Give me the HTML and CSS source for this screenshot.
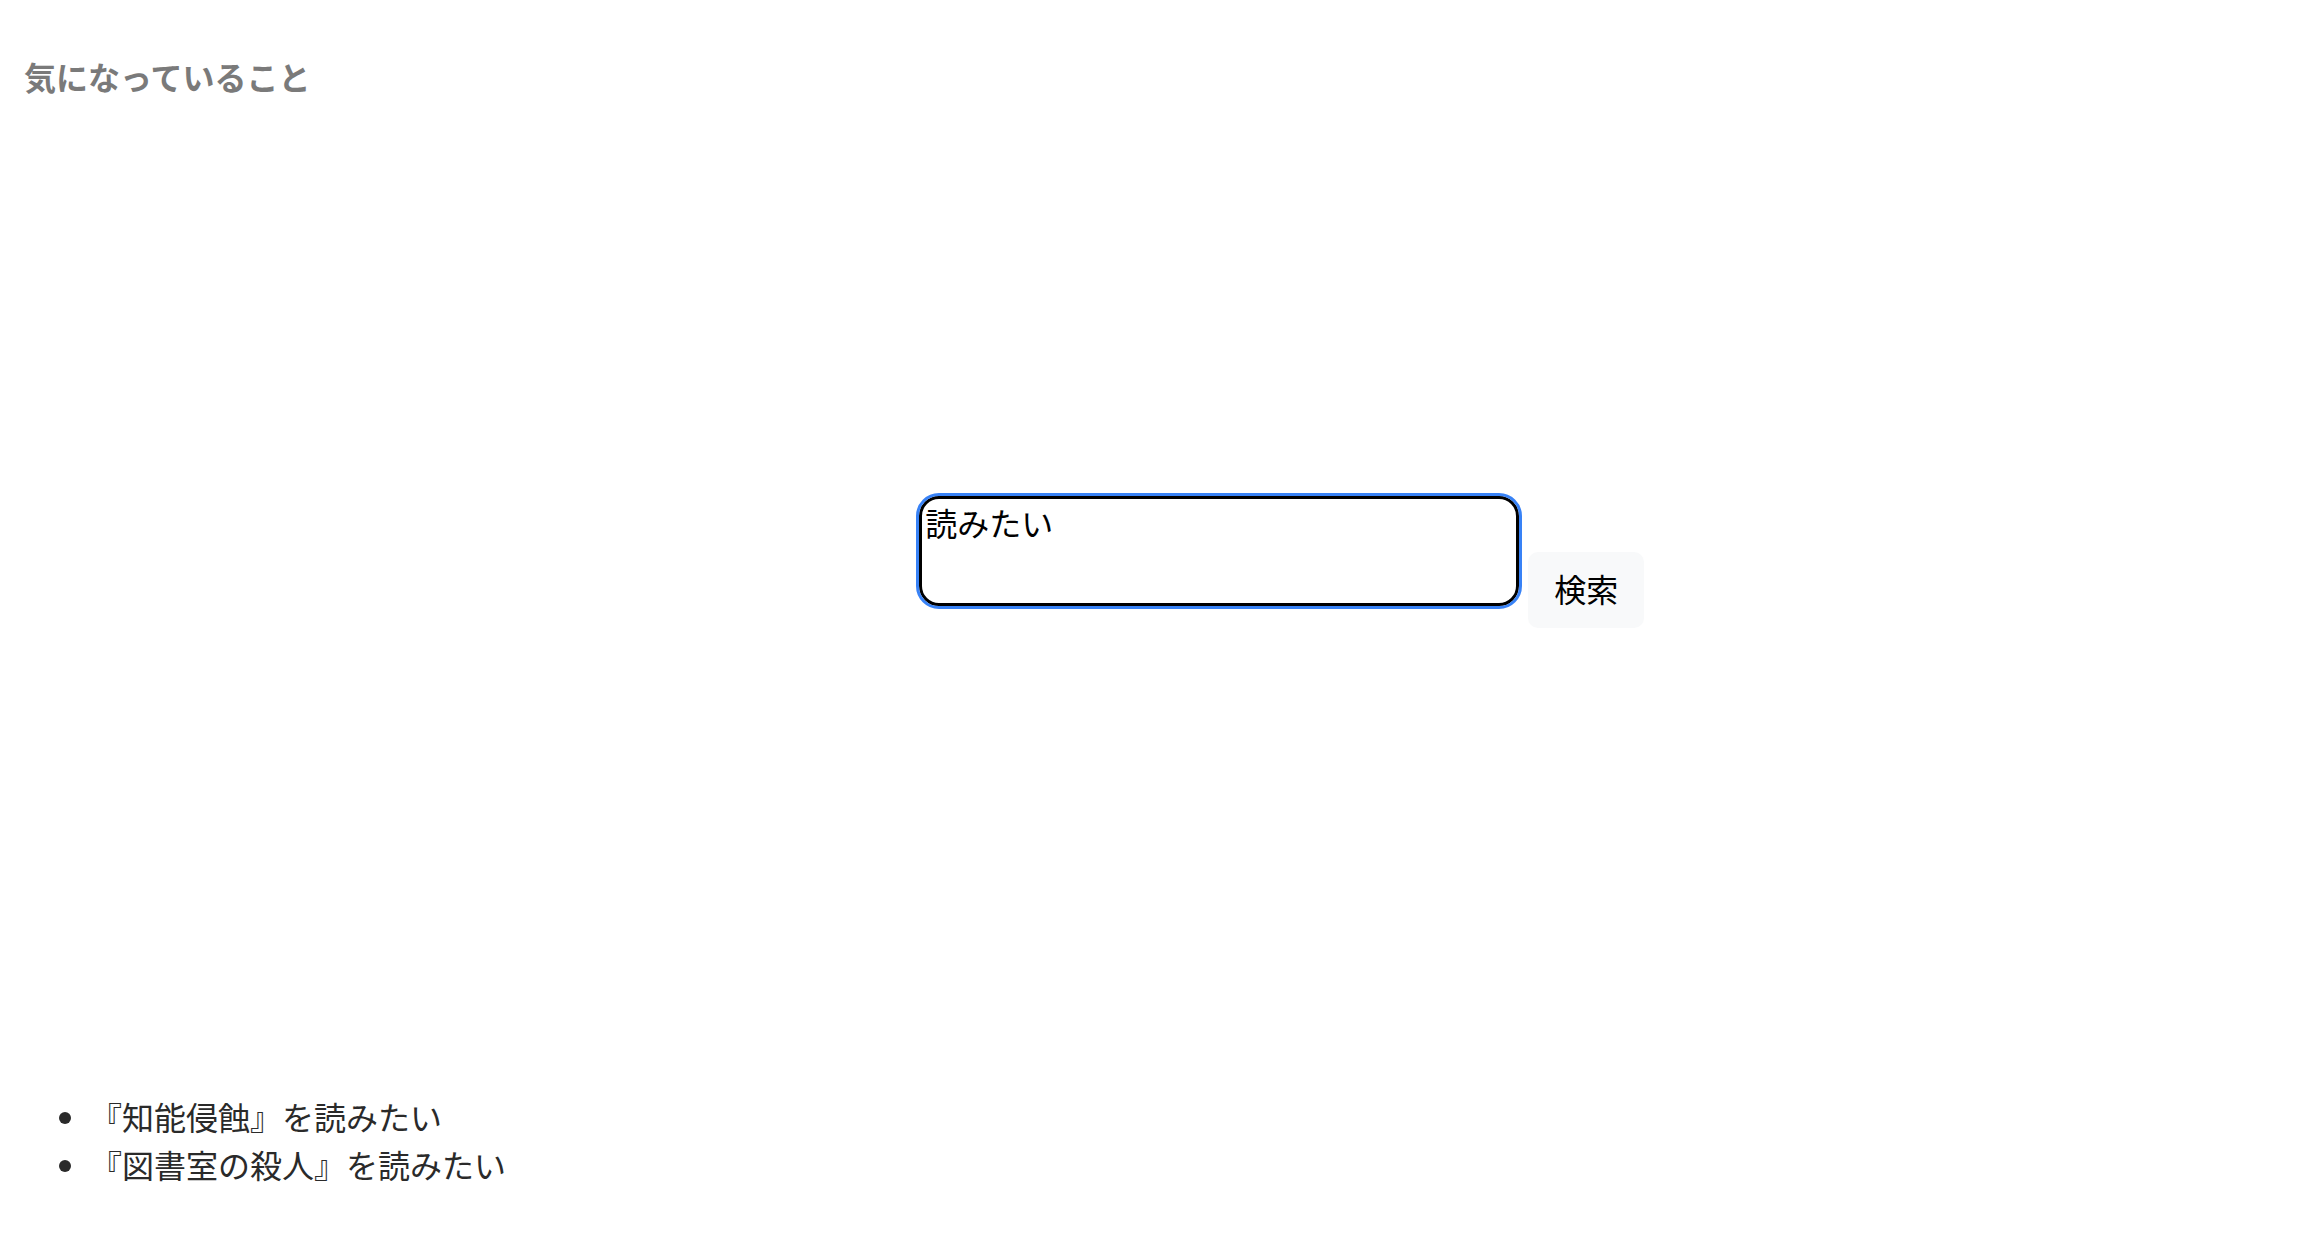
FILE: index.html
```html
<!DOCTYPE html>
<html lang="ja">
<head>
    <meta charset="UTF-8">
    <meta name="viewport" content="width=device-width, initial-scale=1.0">
    <title>気になっていること</title>
    <link rel="stylesheet" href="styles.css">
</head>
<body>
    <header class="header">
        <h1 class="title">気になっていること</h1>
    </header>

    <form class="search" onsubmit="return false">
        <textarea class="search-input" id="searchInput">読みたい</textarea>
        <button class="search-btn" type="submit">検索</button>
    </form>

    <ul class="todo-list">
        <li>『知能侵蝕』を読みたい</li>
        <li>『図書室の殺人』を読みたい</li>
    </ul>
</body>
</html>
```

FILE: styles.css
```css
/* 全体 */
* {
    box-sizing: border-box;
}

body {
    margin: 0;
    font-family: "Noto Sans CJK JP", "Noto Sans", sans-serif;
    font-size: 32px;
    line-height: 1.5;
    color: #333;
    background: #fff;
}

/* 見出し */
.header {
    padding: 52px 24px 0;
}

.title {
    margin: 0;
    font-size: 32px;
    line-height: 48px;
    font-weight: 700;
    color: #7a7a7a;
}

/* 検索フォーム */
.search {
    display: flex;
    align-items: flex-start;
    gap: 9px;
    margin: 396px 0 0;
    padding-left: 40%;
}

.search-input {
    width: 600px;
    height: 110px;
    padding: 0 3px;
    border: 3px solid #000;
    border-radius: 20px;
    outline: 3px solid #3882f6;
    font-family: inherit;
    font-size: 32px;
    line-height: normal;
    color: #000;
    background: #fff;
    resize: none;
}

.search-btn {
    width: 116px;
    height: 76px;
    margin-top: 56px;
    padding: 0 0 4px;
    border: none;
    border-radius: 10px;
    background: #f8f9fa;
    font-family: inherit;
    font-size: 32px;
    color: #000;
    cursor: pointer;
}

/* リスト */
.todo-list {
    margin: 464px 0 0;
    padding-left: 90px;
    line-height: 48px;
    color: #2a2a2a;
}
```
